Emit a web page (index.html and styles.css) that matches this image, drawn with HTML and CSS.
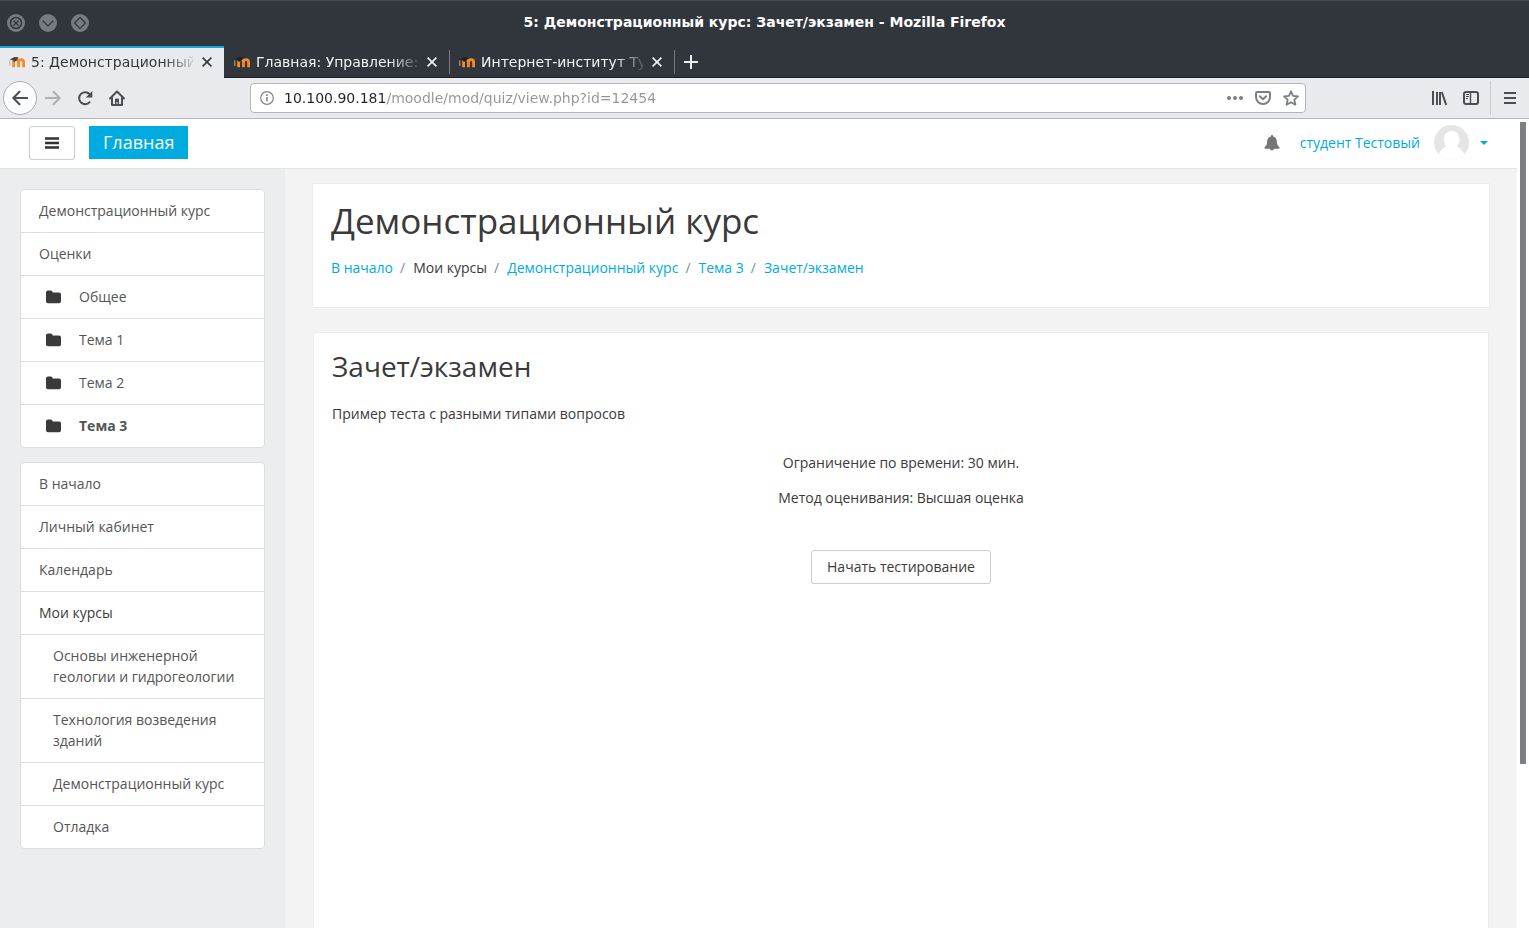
FILE: index.html
```html
<!DOCTYPE html>
<html lang="ru">
<head>
<meta charset="utf-8">
<title>5: Демонстрационный курс: Зачет/экзамен</title>
<link rel="stylesheet" href="styles.css">
</head>
<body>
<svg class="sprite" aria-hidden="true">
  <symbol id="folder" viewBox="0 0 16 14"><path d="M0 2.600C0 1.400.9.5 2 .5h2.700c1.100 0 1.900.8 1.900 2h6.500c1.100 0 1.900.9 1.900 2v6.700c0 1.100-.8 2-1.900 2H2c-1.100 0-2-.9-2-2z" fill="#3a3a3a"/></symbol>
  <symbol id="moodle" viewBox="0 0 16 16"><path d="M4.600 13.200V8.200c0-1.600 1-2.500 2.300-2.500s2.600.9 2.600 2.500v5M9.500 8.200c0-1.600 1.100-2.500 2.600-2.500s2.500.9 2.500 2.500v5" fill="none" stroke="#f58a27" stroke-width="2.800"/><path d="M.8 6.500V12" stroke="#e7a66b" stroke-width="1"/><path d="M.5 5.500 5.500 3l4 .3L8 6.200 5 8 3.500 6z" class="cap"/></symbol>
  <symbol id="close" viewBox="0 0 10 10"><path d="m.6.6 8.800 8.800m0-8.800L.6 9.400" fill="none" stroke="currentColor" stroke-width="1.600"/></symbol>
</svg>
<div class="window">
  <header class="titlebar">
    <div class="window-buttons">
      <button type="button" aria-label="Закрыть окно"><svg viewBox="0 0 18 18"><circle cx="9" cy="9" r="9" fill="#777a7e"/><circle cx="9" cy="9" r="5.500" fill="none" stroke="#31363d" stroke-width="1.500"/><path d="m6.500 6.500 5 5m0-5-5 5" stroke="#31363d" stroke-width="1.200"/></svg></button>
      <button type="button" aria-label="Свернуть"><svg viewBox="0 0 18 18"><circle cx="9" cy="9" r="9" fill="#777a7e"/><path d="m3.500 6.500 5.500 5.500 5.500-5.500" fill="none" stroke="#31363d" stroke-width="1.200"/></svg></button>
      <button type="button" aria-label="Развернуть"><svg viewBox="0 0 18 18"><circle cx="9" cy="9" r="9" fill="#777a7e"/><path d="M9 3.500 14.500 9 9 14.500 3.500 9z" fill="none" stroke="#31363d" stroke-width="1.200"/></svg></button>
    </div>
    <div class="window-title">5: Демонстрационный курс: Зачет/экзамен - Mozilla Firefox</div>
  </header>

  <div class="tabs">
    <div class="tab tab-active"><svg class="favicon"><use href="#moodle"/></svg><span class="tab-label">5: Демонстрационный</span><button type="button" class="tab-close" aria-label="Закрыть вкладку"><svg><use href="#close"/></svg></button></div>
    <div class="tab"><svg class="favicon"><use href="#moodle"/></svg><span class="tab-label">Главная: Управление:</span><button type="button" class="tab-close" aria-label="Закрыть вкладку"><svg><use href="#close"/></svg></button></div>
    <div class="tab"><svg class="favicon"><use href="#moodle"/></svg><span class="tab-label">Интернет-институт Ту</span><button type="button" class="tab-close" aria-label="Закрыть вкладку"><svg><use href="#close"/></svg></button></div>
    <button type="button" class="tab-new" aria-label="Новая вкладка"><svg viewBox="0 0 14 14"><path d="M7 0v14M0 7h14" stroke="#eee" stroke-width="2"/></svg></button>
  </div>

  <div class="toolbar">
    <div class="nav-buttons">
      <button type="button" class="back" aria-label="Назад"><svg viewBox="0 0 16 16"><path d="M15.200 8H1.500M7.500 1.800 1.300 8l6.200 6.200" fill="none" stroke="#4a4f54" stroke-width="2" stroke-linecap="round" stroke-linejoin="round"/></svg></button>
      <button type="button" aria-label="Вперёд"><svg viewBox="0 0 16 16"><path d="M.8 8h13.700M8.500 1.800 14.700 8l-6.200 6.200" fill="none" stroke="#adb0b3" stroke-width="2" stroke-linecap="round" stroke-linejoin="round"/></svg></button>
      <button type="button" aria-label="Обновить"><svg viewBox="0 0 16 16"><path d="M12.600 12.200A6 6 0 1 1 12.500 4" fill="none" stroke="#4a4f54" stroke-width="2" stroke-linecap="round"/><path d="M15.300 1v6.500H8.800z" fill="#4a4f54"/></svg></button>
      <button type="button" aria-label="Домой"><svg viewBox="0 0 16 16"><path d="M1 8.500 8 1.500l7 7M3 8v7h10V8" fill="none" stroke="#4a4f54" stroke-width="2" stroke-linecap="round" stroke-linejoin="round"/><path d="M6 15V9.500Q6 8.500 7 8.500h2q1 0 1 1V15H8.600v-3H7.500v3z" fill="#4a4f54"/></svg></button>
    </div>
    <div class="urlbar">
      <svg viewBox="0 0 14 14"><circle cx="7" cy="7" r="6.300" fill="none" stroke="#808386" stroke-width="1.200"/><path d="M7 6v4.500M7 3.300v1.600" stroke="#808386" stroke-width="1.600"/></svg>
      <input type="text" aria-label="Адрес" value="10.100.90.181/moodle/mod/quiz/view.php?id=12454">
      <button type="button" aria-label="Действия"><svg viewBox="0 0 16 16"><g fill="#7b7f83"><circle cx="2" cy="8" r="2"/><circle cx="8" cy="8" r="2"/><circle cx="14" cy="8" r="2"/></g></svg></button>
      <button type="button" aria-label="Pocket"><svg viewBox="0 0 16 16"><path d="M2.200 2h11.600q1.200 0 1.200 1.200v3.800a7 7 0 0 1-14 0V3.200Q1 2 2.200 2z" fill="none" stroke="#7b7f83" stroke-width="2"/><path d="m4.800 6.300 3.200 3 3.200-3" fill="none" stroke="#7b7f83" stroke-width="2" stroke-linecap="round" stroke-linejoin="round"/></svg></button>
      <button type="button" aria-label="В закладки"><svg viewBox="0 0 16 16"><path d="m8 1.300 2 4.500 5 .5-3.700 3.400 1.100 5L8 12.200l-4.400 2.500 1.100-5L1 6.300l5-.5z" fill="none" stroke="#7b7f83" stroke-width="1.800" stroke-linejoin="round"/></svg></button>
    </div>
    <div class="tools">
      <button type="button" aria-label="Библиотека"><svg viewBox="0 0 16 16"><path d="M2 1v14M6 2v13M9 2v13M10.800 2 15.200 15" fill="none" stroke="#4a4f54" stroke-width="2"/></svg></button>
      <button type="button" aria-label="Боковая панель"><svg viewBox="0 0 16 16"><rect x="1" y="2" width="14" height="12" rx="2" fill="none" stroke="#4a4f54" stroke-width="2"/><path d="M7.500 2v12" stroke="#4a4f54" stroke-width="1.400"/><path d="M3 4.500h3M3 6.500h3M3 8.500h2" stroke="#4a4f54"/></svg></button>
      <button type="button" class="menu" aria-label="Меню"><svg viewBox="0 0 16 16"><path d="M2 3h12M2 8h12M2 13h12" stroke="#4a4f54" stroke-width="2"/></svg></button>
    </div>
  </div>

  <div class="viewport">
    <div class="page">
      <nav class="navbar">
        <button type="button" class="btn drawer-toggle" aria-label="Боковая панель"><svg viewBox="0 0 14 12"><path d="M0 1.500h14M0 6h14M0 10.500h14" stroke="#303234" stroke-width="2.300"/></svg></button>
        <a href="#" class="brand">Главная</a>
        <div class="user">
          <button type="button" class="bell" aria-label="Уведомления"><svg viewBox="0 0 16 16"><path d="M8 0c.6 0 1 .4 1 1v.4c2.500.5 3.800 2.400 3.800 4.600 0 3 .7 4.700 2.700 6.200V13q0 .8-.8.8H1.300q-.8 0-.8-.8v-.8c2-1.500 2.700-3.200 2.700-6.200 0-2.200 1.300-4.100 3.800-4.600V1c0-.6.400-1 1-1zM6 13.500h4a2 2 0 0 1-4 0z" fill="#757575"/></svg></button>
          <a href="#">студент Тестовый</a>
          <button type="button" class="account" aria-label="Меню пользователя">
            <svg class="avatar" viewBox="0 0 35 35"><clipPath id="round"><circle cx="17.500" cy="17.500" r="17.500"/></clipPath><g clip-path="url(#round)"><path d="M0 0h35v35H0z" fill="#e5e5e5"/><path d="M10 14.500C10 9 13 6 17.500 6S25.500 9 25.500 14.500c0 3-1 5.200-2.700 6.700 1.500 1.500 5 2.300 7.700 8.300V35h-26v-5.500c2.700-6 6.200-6.800 7.700-8.300C10.800 19.700 10 17.500 10 14.500z" fill="#fff"/></g></svg>
            <span class="caret"></span>
          </button>
        </div>
      </nav>
      <div class="columns">
        <aside class="sidebar">
          <ul class="list">
            <li><a href="#">Демонстрационный курс</a></li>
            <li><a href="#">Оценки</a></li>
            <li><a href="#" class="topic"><svg><use href="#folder"/></svg>Общее</a></li>
            <li><a href="#" class="topic"><svg><use href="#folder"/></svg>Тема 1</a></li>
            <li><a href="#" class="topic"><svg><use href="#folder"/></svg>Тема 2</a></li>
            <li><a href="#" class="topic current"><svg><use href="#folder"/></svg>Тема 3</a></li>
          </ul>
          <ul class="list">
            <li><a href="#">В начало</a></li>
            <li><a href="#">Личный кабинет</a></li>
            <li><a href="#">Календарь</a></li>
            <li><span class="heading">Мои курсы</span></li>
            <li><a href="#" class="sub">Основы инженерной геологии и гидрогеологии</a></li>
            <li><a href="#" class="sub">Технология возведения зданий</a></li>
            <li><a href="#" class="sub">Демонстрационный курс</a></li>
            <li><a href="#" class="sub">Отладка</a></li>
          </ul>
        </aside>
        <main class="main">
          <section class="card course">
            <h1>Демонстрационный курс</h1>
            <ol class="breadcrumb">
              <li><a href="#">В начало</a></li>
              <li>Мои курсы</li>
              <li><a href="#">Демонстрационный курс</a></li>
              <li><a href="#">Тема 3</a></li>
              <li><a href="#">Зачет/экзамен</a></li>
            </ol>
          </section>
          <section class="card content">
            <h2>Зачет/экзамен</h2>
            <p>Пример теста с разными типами вопросов</p>
            <div class="quiz">
              <p>Ограничение по времени: 30 мин.</p>
              <p>Метод оценивания: Высшая оценка</p>
              <button type="button" class="btn start">Начать тестирование</button>
            </div>
          </section>
        </main>
      </div>
    </div>
    <div class="scrollbar"><div class="thumb"></div></div>
  </div>
</div>
</body>
</html>
```
FILE: styles.css
```css
* { box-sizing: border-box; }
body { margin: 0; font: 14px/21px "Open Sans", "Noto Sans", sans-serif; color: #3a3a3a; }
button { padding: 0; border: 0; background: none; font: inherit; color: inherit; }
svg { display: block; }
a { color: #00acdf; text-decoration: none; }
h1, h2, p, ul, ol { margin: 0; padding: 0; font-weight: 400; list-style: none; }
.sprite { position: absolute; width: 0; height: 0; }
.window { display: flex; flex-direction: column; height: 100vh; overflow: hidden; }

.titlebar { display: grid; grid-template-columns: 1fr auto 1fr; align-items: center; height: 46px; padding: 0 7px 2px; flex: none; background: #31363d; border-top: 1px solid #484d54; font: bold 14px/20px "DejaVu Sans", sans-serif; color: #fff; }
.window-title { padding-bottom: 2px; }
.window-buttons { display: flex; gap: 14px; }
.window-buttons svg { width: 18px; height: 18px; }

.tabs { display: flex; height: 32px; flex: none; background: #31363d; color: #f2f3f3; font: 14px/18px "DejaVu Sans", sans-serif; box-shadow: inset 0 -1px #1c2025; }
.tab { display: flex; align-items: center; width: 225px; padding: 0 9px; gap: 6px; position: relative; }
.tab + .tab { padding-left: 10px; }
.tab + .tab::after { content: ""; position: absolute; right: -1px; top: 4px; bottom: 4px; width: 1px; background: #74787c; }
.tab-active { width: 224px; background: #e9eaed; color: #34383c; box-shadow: inset 0 2px #12aadb; }
.favicon { width: 16px; height: 16px; flex: none; fill: #1f2225; }
.tab-active .favicon { fill: #444; }
.tab-label { flex: 1; min-width: 0; white-space: nowrap; mask-image: linear-gradient(90deg, #000 82%, transparent 104%); }
.tab-close svg { width: 10px; height: 10px; }
.tab-close { padding: 3px; }
.tab-new { width: 34px; display: grid; place-items: center; }
.tab-new svg { width: 14px; height: 14px; }

.toolbar { display: flex; align-items: center; height: 41px; flex: none; background: #e9eaed; border-bottom: 1px solid #b5b6b9; }
.toolbar button { width: 32px; height: 32px; display: grid; place-items: center; flex: none; }
.toolbar svg { width: 16px; height: 16px; flex: none; }
.nav-buttons { display: flex; align-items: center; flex: 1; padding-left: 3px; }
.nav-buttons .back { width: 34px; height: 34px; border: 1px solid #a9abad; border-radius: 50%; background: #fcfcfc; }
.urlbar { display: flex; align-items: center; width: 1056px; height: 30px; padding-left: 9px; background: #fff; border: 1px solid #b5b6b9; border-radius: 4px; }
.urlbar > svg { width: 14px; height: 14px; }
.urlbar button { width: 28px; height: 28px; }
.urlbar input { flex: 1; min-width: 0; height: 26px; margin-left: 10px; padding: 0; border: 0; outline: 0; font: 14px/18px "DejaVu Sans", sans-serif; color: transparent; background: linear-gradient(90deg, #202428 102px, #929599 102px); background-clip: text; }
.tools { display: flex; align-items: center; justify-content: flex-end; flex: 1; max-width: 223px; }
.tools .menu { width: 39px; height: 34px; margin-left: 3px; border-left: 1px solid #cbccd0; }

.viewport { display: flex; flex: 1; min-height: 0; }
.page { flex: 1; min-width: 0; display: flex; flex-direction: column; background: #f3f3f3; }
.scrollbar { width: 12px; padding: 3px; background: #fff; }
.thumb { height: 80%; background: #7c8083; }

.navbar { display: flex; align-items: center; height: 50px; flex: none; padding: 0 29px 2px; background: #fff; border-bottom: 1px solid #e3e4e4; }
.btn { height: 34px; border: 1px solid #ccc; border-radius: 3px; background: #fff; }
.drawer-toggle { width: 46px; display: grid; place-items: center; }
.drawer-toggle svg { width: 14px; height: 12px; }
.brand { margin-left: 14px; padding: 4px 14px; background: #00acdf; color: #fff; font-size: 18px; line-height: 25px; }
.user { display: flex; align-items: center; margin-left: auto; }
.bell svg { width: 16px; height: 16px; }
.bell { margin-right: 20px; }
.account { display: flex; align-items: center; gap: 11px; margin-left: 14px; }
.avatar { width: 35px; height: 35px; }
.caret { border: 4px solid transparent; border-top-color: #00acdf; border-bottom: 0; }

.columns { display: flex; flex: 1; min-height: 0; }
.sidebar { width: 285px; flex: none; padding: 20px; background: #ecedef; display: flex; flex-direction: column; gap: 14px; overflow: hidden; }
.list { background: #fff; border: 1px solid #dcddde; border-radius: 4px; flex: none; }
.list li + li { border-top: 1px solid #dcddde; }
.list a, .heading { display: block; padding: 10px 18px 11px; color: #555; }
.list .heading { color: #3a3a3a; }
.list .topic { display: flex; align-items: center; gap: 17px; padding-left: 25px; }
.topic svg { width: 16px; height: 14px; }
.list .current { font-weight: 700; }
.list .sub { padding-left: 32px; }

.main { flex: 1; min-width: 0; display: flex; flex-direction: column; gap: 24px; padding: 14px 27px 0; }
.card { background: #fff; border: 1px solid #ececec; padding: 17px 18px; }
.course { padding-bottom: 29px; }
h1 { font-size: 35px; line-height: 39px; }
.breadcrumb { display: flex; margin-top: 17px; }
.breadcrumb li + li::before { content: "/"; padding: 0 8px 0 7px; color: #818a91; }
.content { flex: 1; margin: 0 1px; border-bottom: 0; }
h2 { font-size: 28px; line-height: 32px; margin-bottom: 21px; }
.quiz { display: flex; flex-direction: column; align-items: center; gap: 14px; margin-top: 28px; }
.start { margin-top: 28px; padding: 0 15px 2px; }
```
